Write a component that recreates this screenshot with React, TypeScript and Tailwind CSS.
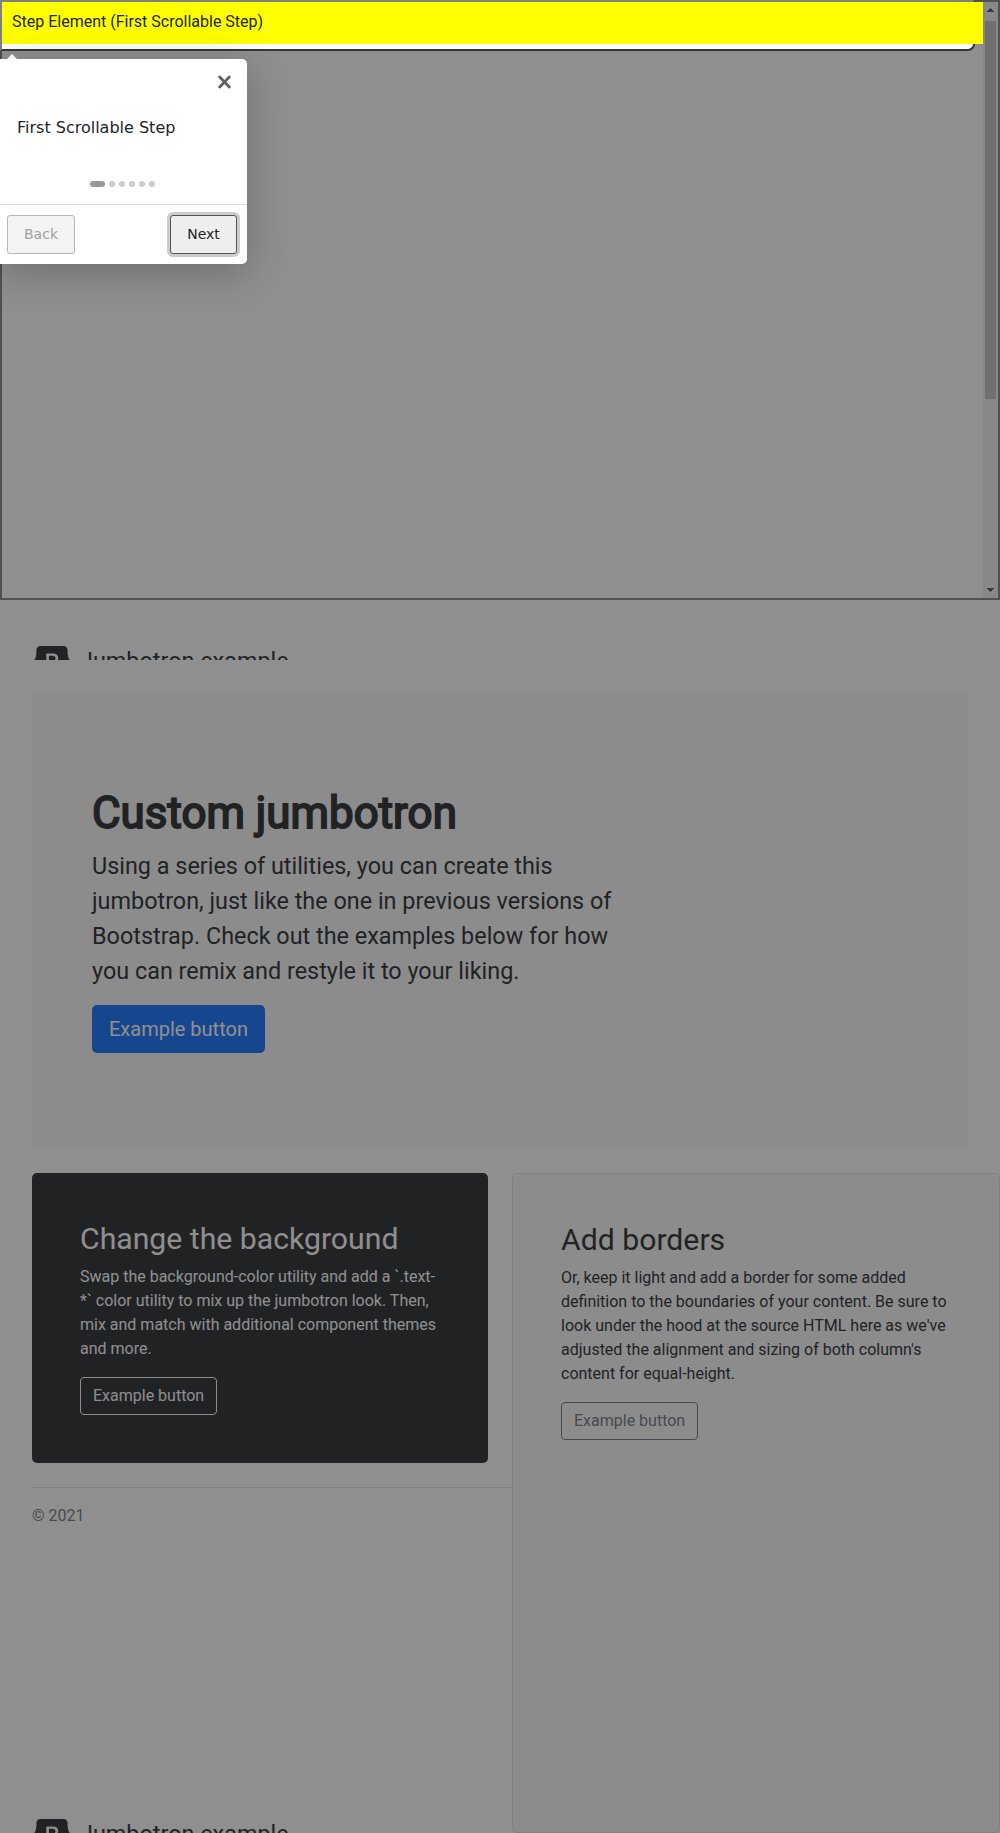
import React from "react";

function BrandHeader() {
  return (
    <div className="flex h-8 items-center text-[#212529]">
      <svg width="40" height="32" viewBox="0 0 118 94" className="mr-2 shrink-0">
        <path
          fill="currentColor"
          fillRule="evenodd"
          clipRule="evenodd"
          d="M24.509 0c-6.733 0-11.715 5.893-11.492 12.284.214 6.14-.064 14.092-2.066 20.577C8.943 39.365 5.547 43.485 0 44.014v5.972c5.547.529 8.943 4.649 10.951 11.153 2.002 6.485 2.28 14.437 2.066 20.577C12.794 88.106 17.776 94 24.51 94H93.5c6.733 0 11.714-5.893 11.491-12.284-.214-6.14.064-14.092 2.066-20.577 2.009-6.504 5.396-10.624 10.943-11.153v-5.972c-5.547-.529-8.934-4.649-10.943-11.153-2.002-6.484-2.28-14.437-2.066-20.577C105.214 5.894 100.233 0 93.5 0H24.508zM80 57.863C80 66.663 73.436 72 62.543 72H44a2 2 0 01-2-2V24a2 2 0 012-2h18.437c9.083 0 15.044 4.92 15.044 12.474 0 5.302-4.01 10.049-9.119 10.88v.277C75.317 46.394 80 51.21 80 57.863zM60.521 28.34H49.948v14.934h8.905c6.884 0 10.68-2.772 10.68-7.727 0-4.643-3.264-7.207-9.012-7.207zM49.948 49.2v16.458H60.91c7.167 0 10.964-2.876 10.964-8.281 0-5.406-3.903-8.178-11.425-8.178H49.948z"
        />
      </svg>
      <span className="-mt-[2px] text-[23.4px] leading-[35px]">Jumbotron example</span>
    </div>
  );
}

function ScrollPanel() {
  return (
    <section className="flex h-[600px] justify-end border-2 border-[#808080] bg-white">
      <div className="flex w-[15px] flex-col items-center justify-between bg-[#f1f1f1] pt-[6px] pb-[6px]">
        <svg width="7" height="4" viewBox="0 0 7 4" shapeRendering="crispEdges">
          <path d="M3 0h1v1h1v1h1v1h1v1H0V3h1V2h1V1h1z" fill="#505050" />
        </svg>
        <div className="mt-[9px] mb-auto h-[378px] w-[11px] bg-[#c1c1c1]" />
        <svg width="7" height="4" viewBox="0 0 7 4" shapeRendering="crispEdges">
          <path d="M3 4h1V3h1V2h1V1h1V0H0v1h1v1h1v1h1z" fill="#505050" />
        </svg>
      </div>
    </section>
  );
}

function Tooltip() {
  return (
    <div className="absolute top-[59px] left-0 z-30 w-[247px] font-['DejaVu_Sans',sans-serif]">
      <div className="absolute -top-[5px] left-1 size-4 [clip-path:polygon(50%_0,100%_50%,0_50%)] bg-white" />
      <div className="relative h-[205px] rounded-r-[5px] bg-white shadow-[0_8px_40px_rgba(0,0,0,0.24)]">
        <div className="flex h-[145px] flex-col">
          <div className="flex justify-end pt-4 pr-4">
            <svg width="13" height="14" viewBox="0 0 13 14" className="h-[14px]">
              <path d="M1.7 2l9.6 10M11.3 2l-9.6 10" stroke="#606060" strokeWidth="2.8" strokeLinecap="round" />
            </svg>
          </div>
          <p className="mt-[27px] pl-[17px] text-base leading-6 text-[#212529]">First Scrollable Step</p>
          <div className="mt-[41px] flex gap-1 pl-[90px]">
            <span className="h-1.5 w-[15px] rounded-full bg-[#999]" />
            {[1, 2, 3, 4, 5].map((n) => (
              <span key={n} className="size-1.5 rounded-full bg-[#ccc]" />
            ))}
          </div>
        </div>
        <div className="flex h-[60px] items-center justify-between border-t border-[#dcdcdc] pr-[10px] pl-[7px]">
          <button className="h-[39px] w-[68px] rounded-[3px] border border-[#b7b7b7] bg-[#f3f3f3] pb-[2px] text-sm text-[#a2a2a2]">
            Back
          </button>
          <button className="h-[39px] w-[67px] rounded-[3px] border border-[#555] bg-[#eee] pb-[2px] text-sm text-[#212121] shadow-[0_0_0_3px_#ccc]">
            Next
          </button>
        </div>
      </div>
    </div>
  );
}

export default function App() {
  return (
    <div className="relative h-[1833px] w-[1000px] overflow-hidden bg-white font-[Roboto,sans-serif] text-base leading-6 text-[#212529]">
      <ScrollPanel />
      <header className="h-[60px] overflow-hidden pt-[46px] pl-8">
        <BrandHeader />
      </header>

      <main className="pt-8 pl-8">
        <section className="mr-8 h-[457px] rounded-[5px] bg-[#f8f9fa] px-[60px] pt-[95px]">
          <h1 className="mb-[9px] text-[43.8px] leading-[52.56px] font-normal tracking-[0.06px] [-webkit-text-stroke:1.9px_#212529]">
            Custom jumbotron
          </h1>
          <p className="mb-4 w-[544px] text-[23.4px] leading-[35.1px]">
            Using a series of utilities, you can create this jumbotron, just like the one in previous versions of
            Bootstrap. Check out the examples below for how you can remix and restyle it to your liking.
          </p>
          <button className="h-12 rounded-[5px] bg-[#0d6efd] px-[17px] text-xl text-white">Example button</button>
        </section>

        <div className="mt-6 flex h-[660px]">
          <div className="flex w-[480px] flex-col">
            <section className="mr-6 h-[290px] shrink-0 rounded-[5px] bg-[#212529] p-12 text-white">
              <h2 className="mb-2 text-[30.2px] leading-[36.24px]">Change the background</h2>
              <p className="mb-4">
                Swap the background-color utility and add a `.text-*` color utility to mix up the jumbotron look. Then,
                mix and match with additional component themes and more.
              </p>
              <button className="h-[38px] rounded-[4px] border border-[#f8f9fa] px-3 text-[#f8f9fa]">
                Example button
              </button>
            </section>
            <footer className="mt-6 border-t border-[#dee2e6] pt-4 text-[#6c757d]">© 2021</footer>
            <div className="mt-auto h-[14px] overflow-hidden">
              <BrandHeader />
            </div>
          </div>
          <section className="w-[488px] rounded-[5px] border border-[#dee2e6] bg-[#f8f9fa] p-12">
            <h2 className="mb-2 text-[30.2px] leading-[36.24px]">Add borders</h2>
            <p className="mb-4">
              Or, keep it light and add a border for some added definition to the boundaries of your content. Be sure to
              look under the hood at the source HTML here as we've adjusted the alignment and sizing of both column's
              content for equal-height.
            </p>
            <button className="h-[38px] rounded-[4px] border border-[#6c757d] px-3 text-[#6c757d]">
              Example button
            </button>
          </section>
        </div>
      </main>

      <div className="pointer-events-none absolute inset-0 z-10 bg-[#202020]/50" />

      <div className="absolute top-0 left-0 z-20 h-[51px] w-[975px] rounded-br-[7px] border-2 border-t-[#808080] border-r-[#343639] border-b-[#343639] border-l-[#808080] bg-white" />
      <div className="absolute top-0.5 left-0.5 z-20 flex h-[42px] w-[981px] items-center bg-[#ff0] pb-[2px] pl-[10px]">
        Step Element (First Scrollable Step)
      </div>
      <Tooltip />
    </div>
  );
}
